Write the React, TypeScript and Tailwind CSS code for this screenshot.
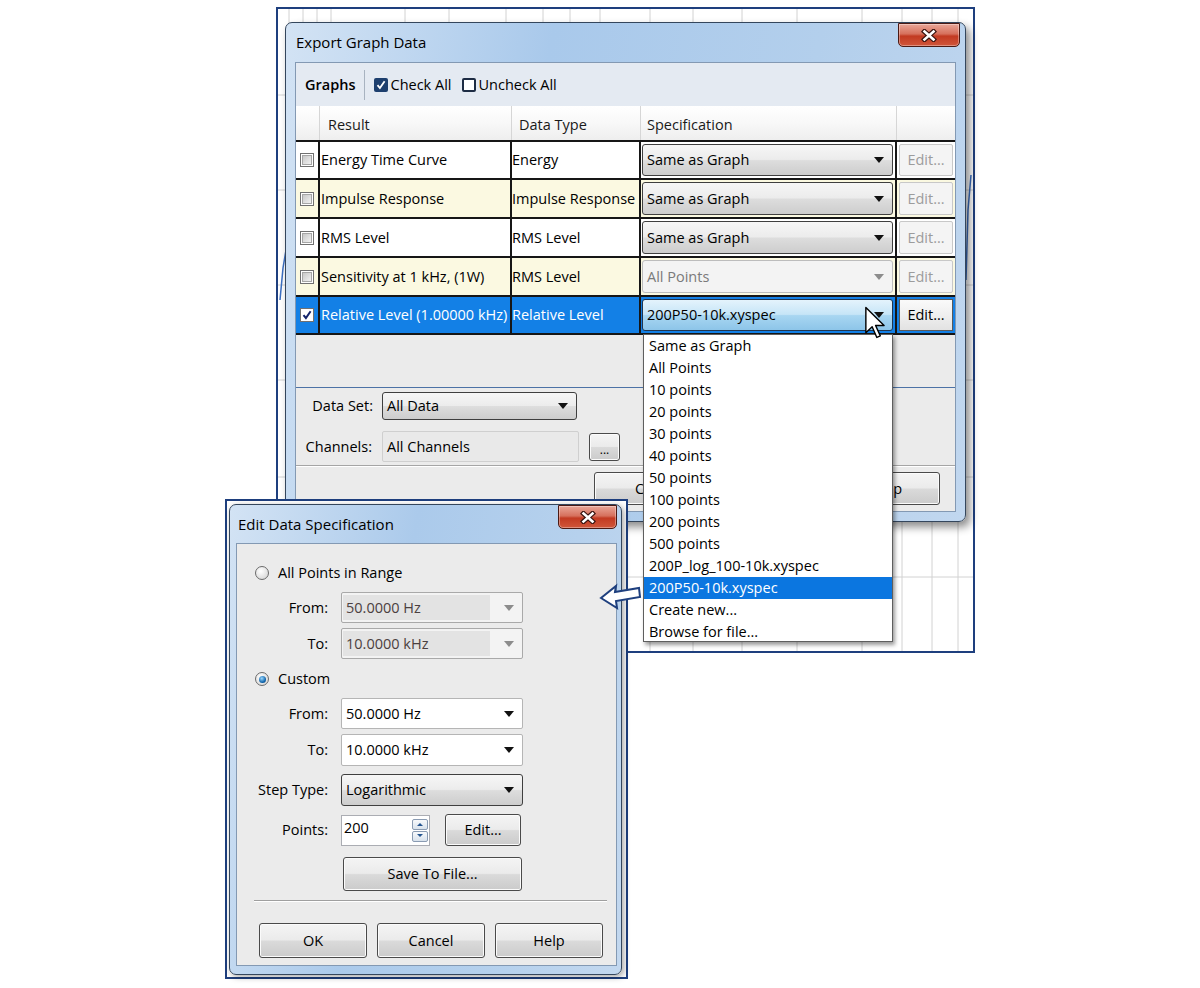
import React from "react";

const cx = (...c: (string | false | undefined)[]) => c.filter(Boolean).join(" ");

function Caret({ gray = false }: { gray?: boolean }) {
  return (
    <svg width="10" height="6" viewBox="0 0 10 6" className="shrink-0">
      <path d="M0 0h10L5 6z" fill={gray ? "#8c8c8c" : "#111"} />
    </svg>
  );
}

type ComboKind = "button" | "field" | "disabled" | "faded" | "selected";

const comboStyles: Record<ComboKind, string> = {
  button:
    "border-[#3f3f3f] rounded-[3px] bg-[linear-gradient(#f6f6f6,#ececec_48%,#dddddd_52%,#cdcdcd)] text-black",
  field: "border-[#b5b5b5] rounded-[2px] bg-white text-black",
  disabled: "border-[#a9a9a9] rounded-[2px] bg-[#f3f3f3] text-[#4b4040]",
  faded: "border-[#bcbcbc] rounded-[3px] bg-[#f3f3f3] text-[#7a7a7a]",
  selected:
    "border-[#1f3550] rounded-[3px] bg-[linear-gradient(#e4f3fc,#c6e5f7_48%,#a8d6f1_52%,#8dc5e9)] text-black",
};

function Combo({ value, kind, className }: { value: string; kind: ComboKind; className?: string }) {
  return (
    <div className={cx("flex items-center border pr-[8px]", comboStyles[kind], className)}>
      {kind === "disabled" ? (
        <span className="flex-1 self-stretch my-[2px] ml-[1px] mr-[14px] pl-[3px] bg-[#e3e3e3] flex items-center">
          {value}
        </span>
      ) : (
        <span className="flex-1 pl-[4px] truncate">{value}</span>
      )}
      <Caret gray={kind === "disabled" || kind === "faded"} />
    </div>
  );
}

function Btn({ children, className }: { children?: React.ReactNode; className?: string }) {
  return (
    <div
      className={cx(
        "flex items-center justify-center rounded-[3px] border border-[#4a4a4a] bg-[linear-gradient(#f4f4f4,#ebebeb_48%,#dadada_52%,#cbcbcb)] shadow-[inset_0_0_0_1px_#fbfbfb] text-black",
        className
      )}
    >
      {children}
    </div>
  );
}

function CloseBtn({ className }: { className: string }) {
  return (
    <div
      className={cx(
        "absolute top-0 h-[24px] rounded-b-[5px] border border-[#4b1a14] bg-[linear-gradient(#e9a698,#d6705c_45%,#c23a22_55%,#d0563a)] shadow-[inset_0_0_0_1px_rgba(255,255,255,0.35)] flex items-center justify-center",
        className
      )}
    >
      <svg width="16" height="13" viewBox="0 0 16 13">
        <path d="M3.5 2.5l9 8M12.5 2.5l-9 8" stroke="#3a1410" strokeWidth="5" strokeLinecap="square" />
        <path d="M3.5 2.5l9 8M12.5 2.5l-9 8" stroke="#fff" strokeWidth="2.6" strokeLinecap="square" />
      </svg>
    </div>
  );
}

function Check({ checked = false }: { checked?: boolean }) {
  return (
    <div className="w-[14px] h-[14px] border border-[#707070] bg-white p-[1px]">
      {checked ? (
        <svg width="10" height="10" viewBox="0 0 10 10">
          <path d="M1.5 5.2l2.4 2.8L8.6 1.2" stroke="#13236b" strokeWidth="2" fill="none" />
        </svg>
      ) : (
        <div className="w-full h-full border border-[#a6a6a6] bg-[linear-gradient(135deg,#c8c8c8,#f2f2f2)]" />
      )}
    </div>
  );
}

function Radio({ checked = false }: { checked?: boolean }) {
  return (
    <div className="w-[14px] h-[14px] rounded-full border border-[#6a6a6a] bg-[radial-gradient(circle_at_40%_35%,#ffffff,#cfcfcf)] flex items-center justify-center">
      {checked && (
        <div className="w-[7px] h-[7px] rounded-full bg-[radial-gradient(circle_at_40%_35%,#9ad8ff,#0b60a8_65%,#073b68)]" />
      )}
    </div>
  );
}

const rows = [
  { result: "Energy Time Curve", type: "Energy", spec: "Same as Graph", yellow: false, h: "h-[38px]", kind: "button" as ComboKind },
  { result: "Impulse Response", type: "Impulse Response", spec: "Same as Graph", yellow: true, h: "h-[39px]", kind: "button" as ComboKind },
  { result: "RMS Level", type: "RMS Level", spec: "Same as Graph", yellow: false, h: "h-[39px]", kind: "button" as ComboKind },
  { result: "Sensitivity at 1 kHz, (1W)", type: "RMS Level", spec: "All Points", yellow: true, h: "h-[39px]", kind: "faded" as ComboKind },
  { result: "Relative Level (1.00000 kHz)", type: "Relative Level", spec: "200P50-10k.xyspec", yellow: false, h: "h-[38px]", kind: "selected" as ComboKind },
];

const specOptions = [
  "Same as Graph",
  "All Points",
  "10 points",
  "20 points",
  "30 points",
  "40 points",
  "50 points",
  "100 points",
  "200 points",
  "500 points",
  "200P_log_100-10k.xyspec",
  "200P50-10k.xyspec",
  "Create new...",
  "Browse for file...",
];

// grid of the graph behind the dialogs (page coordinates)
const vLines = [289, 303, 317, 331, 405, 449, 506, 543, 570, 600, 650, 693, 742, 797, 862, 902, 932, 958];
const hLines = [95, 190, 285, 380, 477, 577];

function GraphGrid() {
  return (
    <svg className="absolute inset-0" width="695" height="642">
      <g transform="translate(-278 -9)">
        {vLines.map((x) => (
          <line key={"v" + x} x1={x} y1={9} x2={x} y2={651} stroke="#d2d2d2" strokeWidth="1" />
        ))}
        {hLines.map((y) => (
          <line key={"h" + y} x1={278} y1={y} x2={973} y2={y} stroke="#d2d2d2" strokeWidth="1" />
        ))}
        <polyline points="280,300 283,268 286,250" stroke="#3b6fc2" strokeWidth="1.5" fill="none" />
        <polyline points="966,280 968,210 971,175" stroke="#3b6fc2" strokeWidth="1.5" fill="none" />
      </g>
    </svg>
  );
}

function ExportDialog() {
  return (
    <div className="absolute left-[7px] top-[13px] w-[681px] h-[500px] rounded-[7px] border border-[#34465c] bg-[linear-gradient(100deg,#d3e3f4,#a9c9eb_35%,#b3cfec_70%,#c1d7ef)] shadow-[4px_5px_9px_rgba(0,0,0,0.45)] px-[9px] pb-[9px] flex flex-col">
      <div className="h-[39px] flex items-center pl-[1px] text-[15px] text-black">Export Graph Data</div>
      <CloseBtn className="right-[5px] w-[62px]" />
      <div className="flex-1 bg-[#ebebeb] border border-[#8399b3] flex flex-col">
        {/* toolbar */}
        <div className="h-[43px] bg-[#e4eaf2] flex items-center pl-[9px] text-black">
          <span className="font-semibold">Graphs</span>
          <div className="ml-[8px] mr-[9px] w-px h-[30px] bg-[#a8b3c0]" />
          <div className="w-[14px] h-[14px] rounded-[2px] bg-[#1d3f6e] flex items-center justify-center">
            <svg width="10" height="10" viewBox="0 0 10 10">
              <path d="M1.5 5.2l2.4 2.8L8.6 1.2" stroke="#fff" strokeWidth="1.8" fill="none" />
            </svg>
          </div>
          <span className="ml-[3px]">Check All</span>
          <div className="ml-[10px] w-[14px] h-[14px] rounded-[2px] border-2 border-[#1d2c44] bg-white" />
          <span className="ml-[3px]">Uncheck All</span>
        </div>

        {/* table */}
        <div className="grid grid-cols-[24px_192px_129px_256px_58px] h-[36px] bg-[linear-gradient(#ffffff,#f8f8f8_50%,#eeeeee)] border-b-2 border-[#161616] text-[#1a1a1a]">
          <div className="border-r border-[#d6d6d6]" />
          <div className="border-r border-[#d6d6d6] pl-[8px] pt-[3px] flex items-center">Result</div>
          <div className="border-r border-[#d6d6d6] pl-[7px] pt-[3px] flex items-center">Data Type</div>
          <div className="border-r border-[#d6d6d6] pl-[6px] pt-[3px] flex items-center">Specification</div>
          <div />
        </div>
        {rows.map((r) => {
          const sel = r.kind === "selected";
          const bg = sel ? "bg-[#1380e6] text-white" : r.yellow ? "bg-[#fbf9e1] text-black" : "bg-white text-black";
          return (
            <div key={r.result} className={cx("grid grid-cols-[24px_192px_129px_256px_58px] border-b-2 border-[#161616]", r.h)}>
              <div className={cx("border-r-2 border-[#161616] flex items-center justify-center", bg)}>
                <Check checked={sel} />
              </div>
              <div className={cx("border-r-2 border-[#161616] pl-[1px] flex items-center whitespace-nowrap overflow-hidden", bg)}>
                {r.result}
              </div>
              <div className={cx("border-r-2 border-[#161616] flex items-center whitespace-nowrap overflow-hidden", bg)}>
                {r.type}
              </div>
              <div className={cx("border-r-2 border-[#161616] pl-[1px] pr-[2px] py-[2px] flex", bg)}>
                <Combo value={r.spec} kind={r.kind} className="flex-1" />
              </div>
              <div className={cx("p-[2px] flex", bg)}>
                {sel ? (
                  <div className="flex-1 flex items-center justify-center border border-[#5a5a5a] bg-[linear-gradient(#fafafa,#efefef_50%,#e2e2e2)] text-black">
                    Edit...
                  </div>
                ) : (
                  <div className="flex-1 flex items-center justify-center border border-[#c8c8c8] rounded-[2px] bg-[#f4f4f4] text-[#9c9c9c]">
                    Edit...
                  </div>
                )}
              </div>
            </div>
          );
        })}
        <div className="h-[53px] border-b border-[#4c72a6]" />

        {/* data set / channels */}
        <div className="mt-[4px] flex items-center text-black">
          <span className="w-[77px] text-right">Data Set:</span>
          <Combo value="All Data" kind="button" className="ml-[9px] w-[195px] h-[28px]" />
        </div>
        <div className="mt-[11px] flex items-center text-black">
          <span className="w-[76px] text-right">Channels:</span>
          <div className="ml-[10px] w-[197px] h-[31px] border border-[#cfcfcf] rounded-[2px] bg-[#e9e9e9] flex items-center pl-[4px]">
            All Channels
          </div>
          <Btn className="ml-[10px] w-[31px] h-[28px] items-end pb-[4px] text-[12px] leading-none">...</Btn>
        </div>
        <div className="mt-[3px] border-t border-[#a5a5a5] border-b border-b-white" />
        <div className="mt-[5px] flex justify-end gap-[8px] pr-[15px]">
          <div className="w-[110px] h-[33px] overflow-hidden">
            <Btn className="w-[110px] h-[33px] justify-start pl-[40px]">C</Btn>
          </div>
          <Btn className="w-[110px] h-[33px]" />
          <Btn className="w-[110px] h-[33px] justify-end pr-[37px]">p</Btn>
        </div>
      </div>
    </div>
  );
}

function SpecDropdown() {
  return (
    <div className="absolute left-[365px] top-[325px] w-[250px] h-[308px] bg-white border border-[#5e5e5e] shadow-[2px_3px_4px_rgba(0,0,0,0.4)] text-black">
      {specOptions.map((o) => (
        <div
          key={o}
          className={cx("h-[22px] leading-[22px] pl-[5px]", o === "200P50-10k.xyspec" && "bg-[#0b76e0] text-white")}
        >
          {o}
        </div>
      ))}
    </div>
  );
}

function Cursor() {
  return (
    <svg className="absolute left-[586px] top-[297px]" width="21" height="33" viewBox="0 0 13 21">
      <path d="M1 1v16l4-3.8 3 6.8 2.2-1-3-6.6h5.4z" fill="#fff" stroke="#000" strokeWidth="0.9" strokeLinejoin="round" />
    </svg>
  );
}

function FormRow({ label, children, className }: { label: string; children: React.ReactNode; className?: string }) {
  return (
    <div className={cx("flex items-center", className)}>
      <span className="w-[91px] text-right">{label}</span>
      <div className="ml-[13px] flex items-center">{children}</div>
    </div>
  );
}

function EditSpecDialog() {
  return (
    <div className="absolute left-[2px] top-[3px] w-[393px] h-[471px] rounded-[7px] border border-[#34465c] bg-[linear-gradient(100deg,#d3e3f4,#abcaeb_40%,#b6d1ed_75%,#c3d8ef)] shadow-[2px_2px_6px_rgba(0,0,0,0.35)] pl-[6px] pr-[4px] pb-[8px] flex flex-col">
      <div className="h-[38px] flex items-center pl-[2px] text-[15px] text-black">Edit Data Specification</div>
      <CloseBtn className="right-[4px] w-[59px]" />
      <div className="flex-1 bg-[#ebebeb] border border-[#8399b3] flex flex-col text-black">
        <div className="mt-[19px] h-[20px] flex items-center pl-[18px]">
          <Radio />
          <span className="ml-[9px]">All Points in Range</span>
        </div>
        <FormRow label="From:" className="mt-[9px]">
          <Combo value="50.0000 Hz" kind="disabled" className="w-[182px] h-[31px]" />
        </FormRow>
        <FormRow label="To:" className="mt-[5px]">
          <Combo value="10.0000 kHz" kind="disabled" className="w-[182px] h-[31px]" />
        </FormRow>
        <div className="mt-[10px] h-[20px] flex items-center pl-[18px]">
          <Radio checked />
          <span className="ml-[9px]">Custom</span>
        </div>
        <FormRow label="From:" className="mt-[9px]">
          <Combo value="50.0000 Hz" kind="field" className="w-[182px] h-[31px]" />
        </FormRow>
        <FormRow label="To:" className="mt-[5px]">
          <Combo value="10.0000 kHz" kind="field" className="w-[182px] h-[32px]" />
        </FormRow>
        <FormRow label="Step Type:" className="mt-[8px]">
          <Combo value="Logarithmic" kind="button" className="w-[182px] h-[32px]" />
        </FormRow>
        <FormRow label="Points:" className="mt-[8px]">
          <div className="w-[89px] h-[31px] border border-[#abadb3] bg-white flex items-start pl-[2px] pt-[1px]">
            <span className="flex-1">200</span>
            <div className="mt-[2px] mr-[1px] flex flex-col gap-[1px]">
              {["M1 5l3-3 3 3z", "M1 1l3 3 3-3z"].map((d) => (
                <div
                  key={d}
                  className="w-[16px] h-[11px] border border-[#8a9bb2] rounded-[2px] bg-[linear-gradient(#f7f9fb,#d9e2ec)] flex items-center justify-center"
                >
                  <svg width="8" height="6" viewBox="0 0 8 6">
                    <path d={d} fill="#24548f" />
                  </svg>
                </div>
              ))}
            </div>
          </div>
          <Btn className="ml-[15px] w-[76px] h-[32px]">Edit...</Btn>
        </FormRow>
        <Btn className="mt-[11px] ml-[106px] w-[179px] h-[34px]">Save To File...</Btn>
        <div className="mt-[9px] ml-[17px] w-[353px] border-t border-[#9f9f9f] border-b border-b-white" />
        <div className="mt-[21px] ml-[22px] flex gap-[10px]">
          <Btn className="w-[108px] h-[35px]">OK</Btn>
          <Btn className="w-[108px] h-[35px]">Cancel</Btn>
          <Btn className="w-[108px] h-[35px]">Help</Btn>
        </div>
      </div>
    </div>
  );
}

export default function App() {
  return (
    <div className="relative w-[1200px] h-[988px] bg-white overflow-hidden text-[14.5px] font-medium font-['Open_Sans','Noto_Sans',sans-serif]">
      {/* top screenshot */}
      <div className="absolute left-[276px] top-[7px] w-[699px] h-[646px] border-2 border-[#1e3f7e] bg-white">
        <GraphGrid />
        <ExportDialog />
        <SpecDropdown />
        <Cursor />
      </div>

      {/* bottom screenshot */}
      <div className="absolute left-[225px] top-[499px] w-[403px] h-[480px] border-2 border-[#1e3f7e] bg-white">
        <EditSpecDialog />
      </div>

      {/* pointer arrow between them */}
      <svg className="absolute left-[598px] top-[582px]" width="46" height="30" viewBox="0 0 46 30">
        <path d="M3 16L18 4l-1 6 24-4 1 9-24 4 1 7z" fill="#fff" stroke="#1e3f7e" strokeWidth="2" strokeLinejoin="miter" />
      </svg>
    </div>
  );
}
